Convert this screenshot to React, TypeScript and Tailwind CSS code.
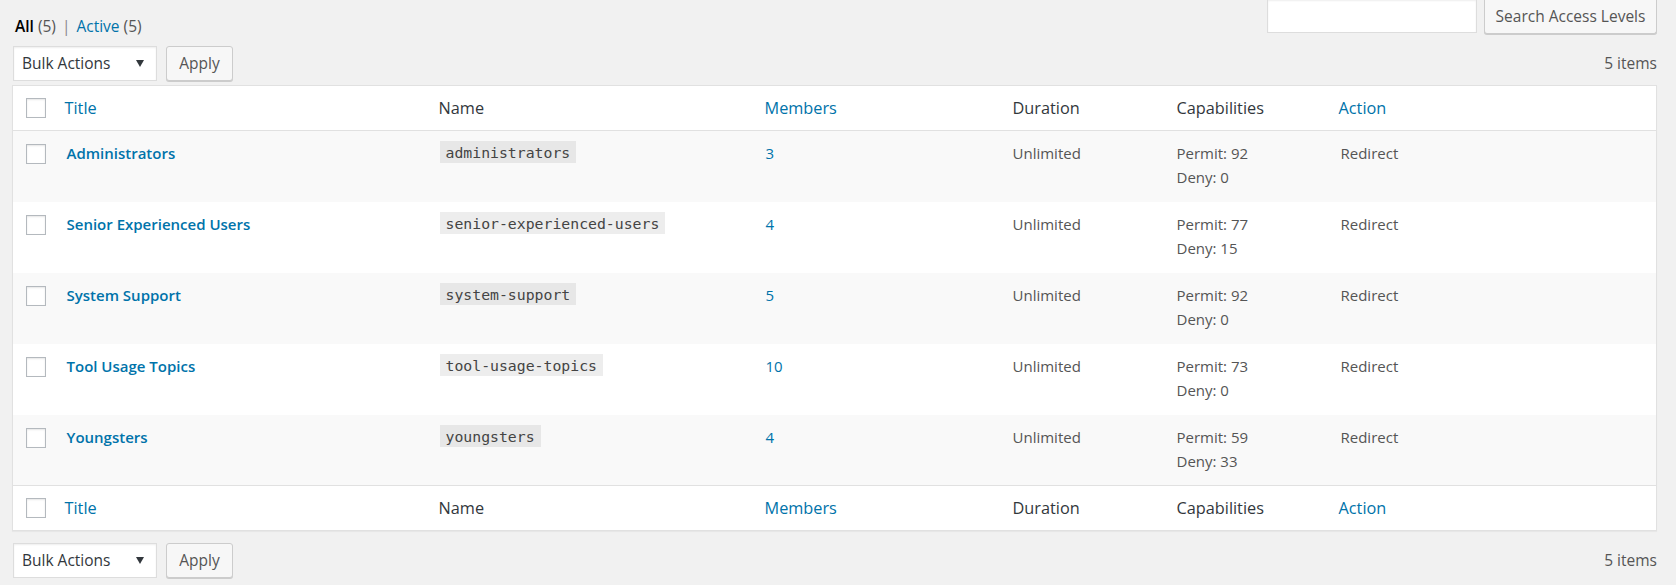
import React from "react";

type Level = {
  title: string;
  name: string;
  members: number;
  permit: number;
  deny: number;
};

const levels: Level[] = [
  { title: "Administrators", name: "administrators", members: 3, permit: 92, deny: 0 },
  { title: "Senior Experienced Users", name: "senior-experienced-users", members: 4, permit: 77, deny: 15 },
  { title: "System Support", name: "system-support", members: 5, permit: 92, deny: 0 },
  { title: "Tool Usage Topics", name: "tool-usage-topics", members: 10, permit: 73, deny: 0 },
  { title: "Youngsters", name: "youngsters", members: 4, permit: 59, deny: 33 },
];

const font = "font-['Open_Sans',sans-serif]";

function Checkbox() {
  return (
    <span className="block h-[20px] w-[20px] border border-[#b4b9be] bg-white shadow-[inset_0_1px_2px_rgba(0,0,0,0.1)]" />
  );
}

function TableNav() {
  return (
    <div className="flex h-[35px] items-center justify-between">
      <div className="flex items-center">
        <div className="ml-px flex h-[35px] w-[144px] items-center justify-between border border-[#ddd] bg-white pl-[8px] pr-[12px] text-[15.5px] text-[#32373c] shadow-[inset_0_1px_2px_rgba(0,0,0,0.07)]">
          <span>Bulk Actions</span>
          <svg width="8" height="7" viewBox="0 0 8 7">
            <path d="M0 0h8L4 7z" fill="#32373c" />
          </svg>
        </div>
        <button className="ml-[9px] flex h-[35px] w-[67px] items-center justify-center rounded-[3px] border border-[#ccc] bg-[#f7f7f7] text-[15.5px] text-[#555] shadow-[0_1px_0_#ccc]">
          Apply
        </button>
      </div>
      <span className="text-[15.5px] text-[#555]">5 items</span>
    </div>
  );
}

function HeadRow({ top }: { top?: boolean }) {
  const border = top ? "border-b" : "border-t";
  return (
    <tr className={`h-[45px] bg-white text-[16.3px] ${border} border-[#e1e1e1]`}>
      <td className="pl-[13px] align-middle">
        <Checkbox />
      </td>
      <th className="pl-[8px] text-left font-normal text-[#0073aa]">Title</th>
      <th className="pl-[9px] text-left font-normal text-[#32373c]">Name</th>
      <th className="pl-[9px] text-left font-normal text-[#0073aa]">Members</th>
      <th className="pl-[10px] text-left font-normal text-[#32373c]">Duration</th>
      <th className="pl-[10px] text-left font-normal text-[#32373c]">Capabilities</th>
      <th className="pl-[9px] text-left font-normal text-[#0073aa]">Action</th>
    </tr>
  );
}

export default function App() {
  return (
    <div className={`min-h-[585px] bg-[#f1f1f1] pl-[12px] pr-[19px] ${font} text-[15px] text-[#555]`}>
      <div className="flex h-[46px] items-start justify-between">
        <div className="pl-[3px] pt-[14px] text-[15.5px] leading-[24px]">
          <span className="font-semibold text-black">All</span> <span>(5)</span>
          <span className="px-[6px] text-[#888]">|</span>
          <span className="text-[#0073aa]">Active</span> <span>(5)</span>
        </div>
        <div className="flex items-start gap-[7px]">
          <div className="h-[33px] w-[210px] border border-t-0 border-[#ddd] bg-white shadow-[inset_0_1px_2px_rgba(0,0,0,0.07)]" />
          <button className="flex h-[34px] w-[173px] items-center justify-center rounded-b-[3px] border border-t-0 border-[#ccc] bg-[#f7f7f7] text-[15.5px] text-[#555] shadow-[0_1px_0_#ccc]">
            Search Access Levels
          </button>
        </div>
      </div>

      <TableNav />

      <table className="mt-[4px] mb-[12px] w-full table-fixed border-collapse border border-[#e1e1e1] bg-white shadow-[0_1px_1px_rgba(0,0,0,0.04)]">
        <colgroup>
          <col className="w-[44px]" />
          <col className="w-[373px]" />
          <col className="w-[326px]" />
          <col className="w-[247px]" />
          <col className="w-[164px]" />
          <col className="w-[163px]" />
          <col />
        </colgroup>
        <thead>
          <HeadRow top />
        </thead>
        <tbody>
          {levels.map((l, i) => (
            <tr key={l.name} className={`h-[71px] align-top ${i % 2 === 0 ? "bg-[#f9f9f9]" : "bg-white"}`}>
              <td className="pl-[13px] pt-[13px]">
                <Checkbox />
              </td>
              <td className="pl-[10px] pt-[10px] leading-[24px]">
                <span className="font-semibold text-[#0073aa]">{l.title}</span>
              </td>
              <td className="pl-[10px] pt-[9px] leading-[24px]">
                <code className="bg-black/[0.07] px-[6px] pb-[2px] pt-[3px] font-['DejaVu_Sans_Mono',monospace] text-[14.8px] text-[#444]">
                  {l.name}
                </code>
              </td>
              <td className="pl-[10px] pt-[10px] leading-[24px] text-[#0073aa]">{l.members}</td>
              <td className="pl-[10px] pt-[10px] leading-[24px]">Unlimited</td>
              <td className="pl-[10px] pt-[10px] leading-[24px]">
                <div>Permit: {l.permit}</div>
                <div>Deny: {l.deny}</div>
              </td>
              <td className="pl-[11px] pt-[10px] leading-[24px]">Redirect</td>
            </tr>
          ))}
        </tbody>
        <tfoot>
          <HeadRow />
        </tfoot>
      </table>

      <TableNav />
    </div>
  );
}
